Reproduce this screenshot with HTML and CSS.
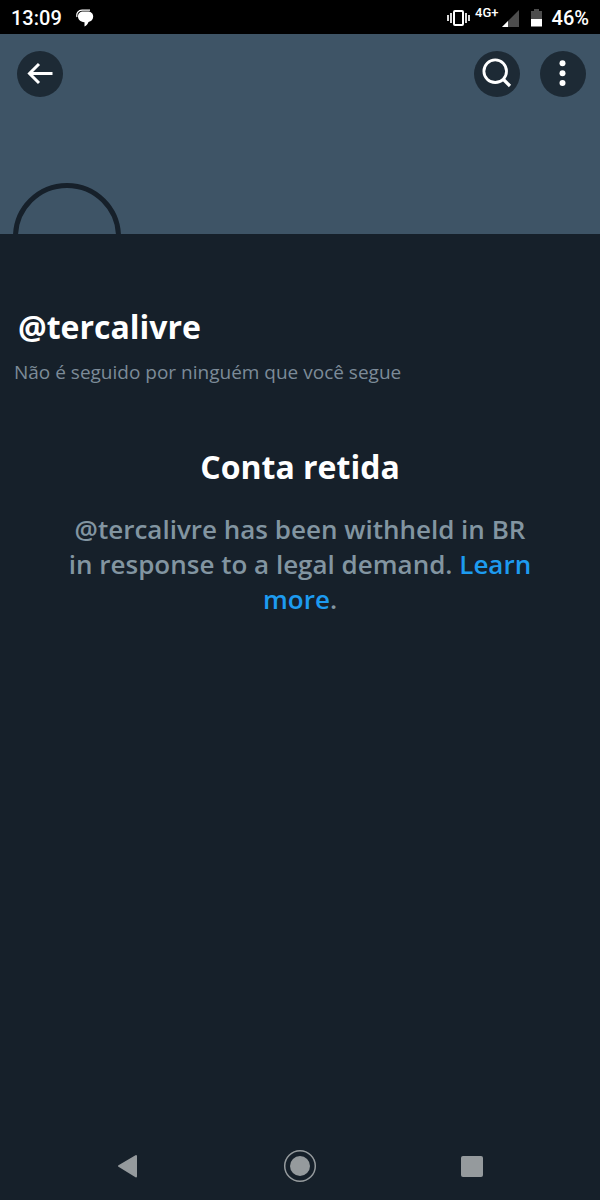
FILE: index.html
```
<!DOCTYPE html>
<html lang="pt-BR">
  <head>
    <meta charset="UTF-8" />
    <meta name="viewport" content="width=device-width, initial-scale=1.0" />
    <title>@tercalivre</title>
    <link rel="stylesheet" href="styles.css">
  </head>
  <body>
    <div class="status-bar">
      <span class="clock">13:09</span>
      <svg class="chat-icon" width="18" height="18" viewBox="0 0 18 18">
        <path d="M1 8C0 4 2.500 1.200 6 1.200h8" fill="none" stroke="#fff" stroke-width="1.200" />
        <path d="M7.500 2.500h4c3.500 0 5.700 2 5.700 5s-2 5-4.700 5.500c-.8 2-2 3.500-4 4.500v-4.200C4 12.800 2 10.500 2 7.500s2-5 5.500-5z" fill="#fff" />
      </svg>
      <svg class="vibrate-icon" width="23" height="18" viewBox="0 0 23 18">
        <rect x="7" y="2" width="9" height="14" rx="1" fill="none" stroke="#fff" stroke-width="2" />
        <path d="M1 6v6M4 4v10M19 4v10M22 6v6" stroke="#fff" stroke-width="1.700" />
      </svg>
      <span class="network">4G+</span>
      <svg class="signal-icon" width="17" height="17" viewBox="0 0 17 17">
        <path d="M17 0v17H0z" fill="#4d4d4d" />
        <path d="M6 11v6H0z" fill="#fff" />
      </svg>
      <svg class="battery-icon" width="11" height="18" viewBox="0 0 11 18">
        <path d="M3 0h5v2h3v8H0V2h3z" fill="#4d4d4d" />
        <path d="M0 10h11v7.500H0z" fill="#fff" />
      </svg>
      <span class="battery">46%</span>
    </div>

    <header class="banner">
      <div class="toolbar">
        <button class="round-btn back-btn" aria-label="Voltar">
          <svg width="46" height="46" viewBox="0 0 46 46">
            <path d="M35.500 22.500H13M22 13l-9.500 9.500L22 32" fill="none" stroke="#fff" stroke-width="3" />
          </svg>
        </button>
        <button class="round-btn" aria-label="Buscar">
          <svg width="46" height="46" viewBox="0 0 46 46">
            <circle cx="21.200" cy="20.200" r="11.300" fill="none" stroke="#fff" stroke-width="2.800" />
            <path d="M29 28l7 7" stroke="#fff" stroke-width="3.200" />
          </svg>
        </button>
        <button class="round-btn" aria-label="Mais">
          <svg width="46" height="46" viewBox="0 0 46 46">
            <g fill="#fff">
              <circle cx="22.500" cy="12.300" r="3" />
              <circle cx="22.500" cy="22.200" r="3" />
              <circle cx="22.500" cy="32.100" r="3" />
            </g>
          </svg>
        </button>
      </div>
      <div class="avatar"></div>
    </header>

    <main>
      <div class="profile">
        <h1>@tercalivre</h1>
        <p>Não é seguido por ninguém que você segue</p>
      </div>
      <div class="withheld">
        <h2>Conta retida</h2>
        <p>@tercalivre has been withheld in BR in response to a legal demand. <a href="#">Learn more</a>.</p>
      </div>
    </main>

    <nav class="system-nav">
      <button aria-label="Anterior">
        <svg width="34" height="34" viewBox="0 0 34 34">
          <path d="M8 17L25 7v20.500z" fill="#959a9d" stroke="#959a9d" stroke-width="2" stroke-linejoin="round" />
        </svg>
      </button>
      <button aria-label="Início">
        <svg width="34" height="34" viewBox="0 0 34 34">
          <circle cx="17" cy="17" r="15.300" fill="none" stroke="#959a9d" stroke-width="1.500" />
          <circle cx="17" cy="17" r="10" fill="#959a9d" />
        </svg>
      </button>
      <button aria-label="Recentes">
        <svg width="34" height="34" viewBox="0 0 34 34">
          <rect x="6" y="7" width="22" height="21" rx="2" fill="#959a9d" />
        </svg>
      </button>
    </nav>
  </body>
</html>
```
FILE: styles.css
```
* {
  box-sizing: border-box;
}
body {
  display: flex;
  flex-direction: column;
  min-height: 100vh;
  margin: 0;
  background: #16202a;
  color: #fff;
  font-family: "Open Sans", sans-serif;
}
h1,
h2,
p {
  margin: 0;
}
button {
  display: flex;
  padding: 0;
  border: none;
  background: none;
  cursor: pointer;
}
.status-bar {
  display: flex;
  align-items: center;
  height: 34px;
  padding: 2px 11px 0;
  background: #000;
  font-family: Roboto, sans-serif;
  font-size: 20px;
  font-weight: 500;
  line-height: 32px;
}
.chat-icon {
  margin-left: 14px;
}
.vibrate-icon {
  margin-left: auto;
}
.network {
  margin: 0 3px 0 5px;
  font-size: 13px;
  line-height: 22px;
  align-self: flex-start;
}
.battery-icon {
  margin: 0 10px 0 12px;
}
.banner {
  height: 200px;
  padding: 17px 14px 0 17px;
  background: #3e5466;
  overflow: hidden;
}
.toolbar {
  display: flex;
  gap: 20px;
}
.round-btn {
  border-radius: 50%;
  background: #1d2a35;
}
.back-btn {
  margin-right: auto;
}
.avatar {
  width: 108px;
  height: 108px;
  margin: 86px 0 0 -4px;
  border: 5px solid #16202a;
  border-radius: 50%;
}
main {
  flex: 1;
}
.profile {
  padding: 71px 14px 0;
}
h1,
h2 {
  font-size: 32px;
  font-weight: 700;
  line-height: 44px;
}
h1 {
  padding-left: 4px;
}
.profile p {
  padding-top: 9px;
  color: #7c8b98;
  font-size: 19px;
  line-height: 28px;
}
.withheld {
  padding: 59px 60px 0;
  text-align: center;
}
.withheld p {
  padding-top: 23px;
  color: #8295a1;
  font-size: 26px;
  font-weight: 600;
  line-height: 35px;
}
.withheld a {
  color: #1d9bf0;
  text-decoration: none;
}
.system-nav {
  display: grid;
  grid-template-columns: repeat(3, 1fr);
  justify-items: center;
  padding: 16px 7% 17px;
}
```
